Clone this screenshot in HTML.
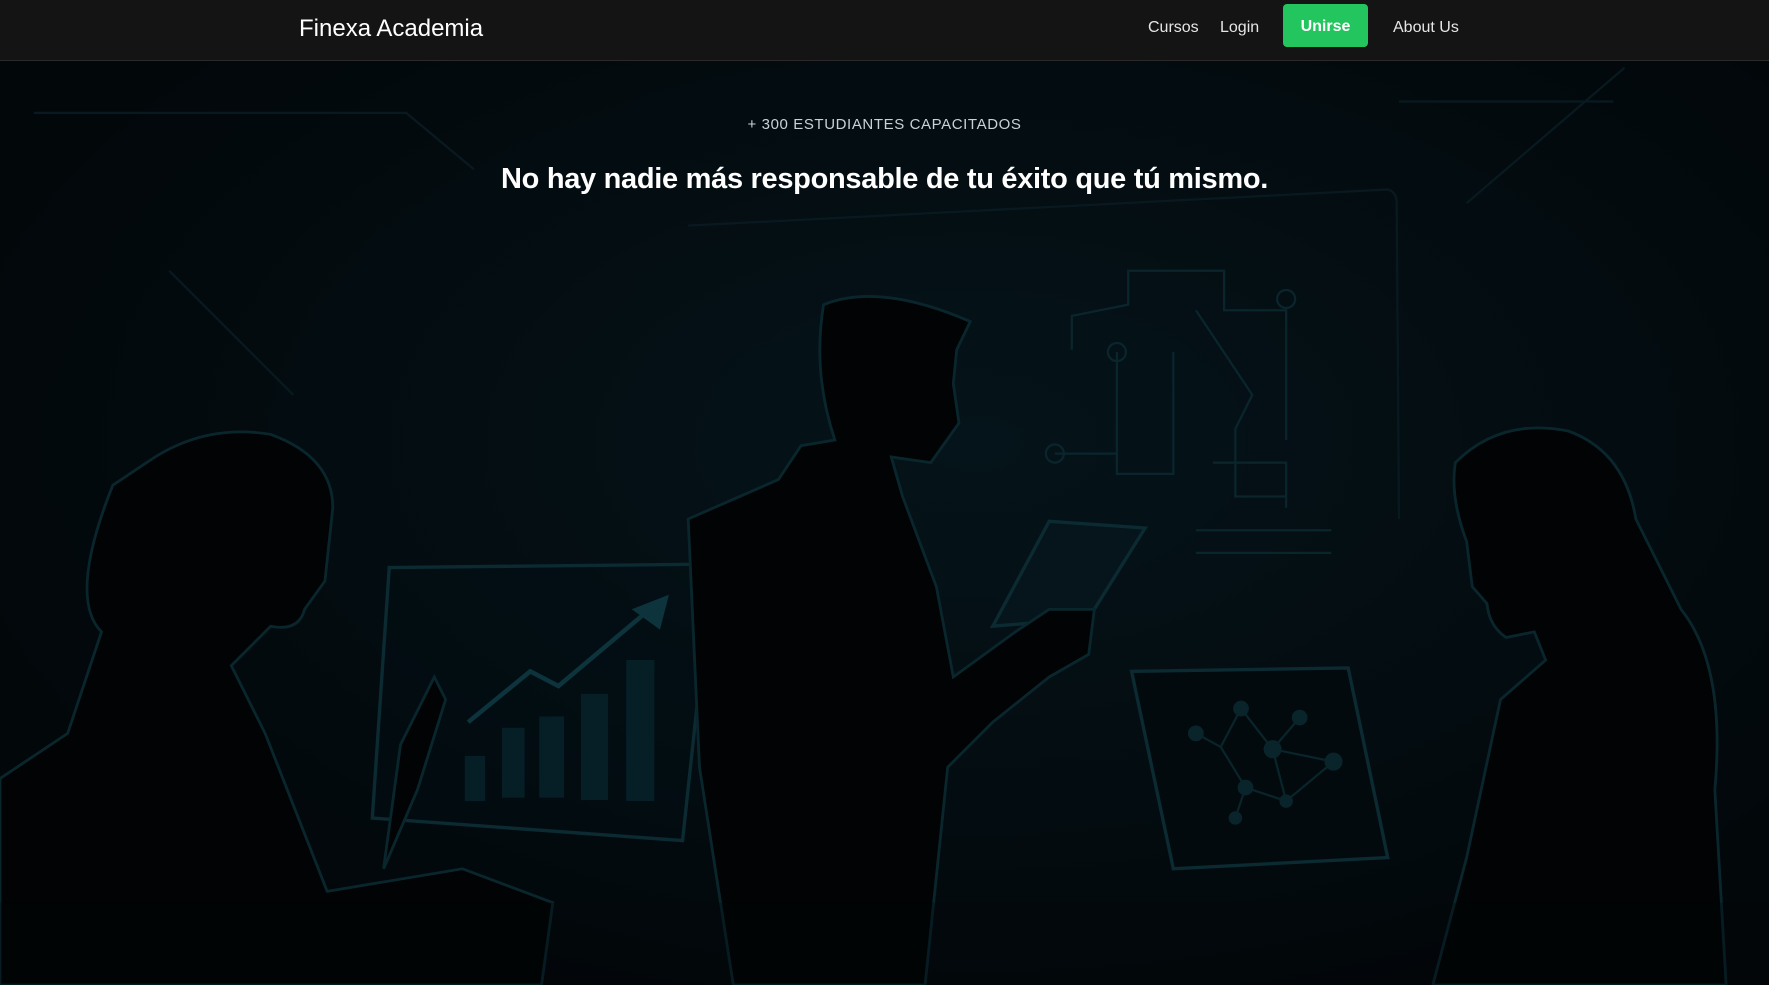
<!DOCTYPE html>
<html><head><meta charset="utf-8"><style>
html,body{margin:0;padding:0;width:1769px;height:985px;overflow:hidden;background:#03090c;font-family:"Liberation Sans",sans-serif}
svg.bg{position:absolute;left:0;top:0;width:1769px;height:985px}
nav{position:absolute;left:0;top:0;width:1769px;height:61px;background:#141414;border-bottom:1px solid #2a2a2a;box-sizing:border-box}
.logo{position:absolute;left:299px;top:13px;color:#fff;font-size:24px;line-height:32px}
.lnk{position:absolute;top:18px;color:#e6e6e6;font-size:16px;line-height:20px}
.btn{position:absolute;left:1283px;top:4px;width:85px;height:43px;background:#22c55e;border-radius:4px;color:#fff;font-weight:bold;font-size:16px;line-height:45px;text-align:center}
.sub{position:absolute;left:0;width:1769px;top:116px;text-align:center;color:#c9d3d6;font-size:15px;letter-spacing:0.6px}
h1{position:absolute;left:0;width:1769px;top:161px;margin:0;text-align:center;color:#fff;font-size:29px;font-weight:bold;line-height:36px;letter-spacing:-0.3px}
</style></head><body>
<svg class="bg" viewBox="0 0 1568 873" preserveAspectRatio="none">
<defs><radialGradient id="g" cx="0.55" cy="0.45" r="0.6"><stop offset="0" stop-color="#05141a"/><stop offset="1" stop-color="#02070a"/></radialGradient></defs>
<rect width="1568" height="873" fill="url(#g)"/>
<g fill="none" stroke="#081a20" stroke-width="2">
<path d="M30 100 H360 L420 150 M150 240 L260 350 M1240 90 L1430 90 M1300 180 L1440 60"/>
<path d="M610 200 L1230 168 Q1238 170 1238 180 L1240 460"/>
</g>
<g fill="none" stroke="#0a252c" stroke-width="2">
<path d="M950 310 V280 L1000 270 V240 H1085 V275 H1140 V390 M990 312 V420 H1040 V312 M1060 275 L1110 350 L1095 380 V440 H1140 M1075 410 H1140 V450 M935 402 H990 M1060 470 H1180 M1060 490 H1180"/>
<circle cx="990" cy="312" r="8"/><circle cx="935" cy="402" r="8"/><circle cx="1140" cy="265" r="8"/>
</g>
<g stroke="#0b2a31" stroke-width="3">
<path d="M345 503 L625 500 Q632 502 630 512 L605 745 L330 725 Z" fill="#03111560"/>
<path d="M1003 595 L1195 592 L1230 760 L1040 770 Z" fill="#020a0d"/>
<path d="M930 462 L1015 468 L965 548 L880 555 Z" fill="#05151b"/>
</g>
<g fill="#061f26"><rect x="412" y="670" width="18" height="40"/><rect x="445" y="645" width="20" height="62"/><rect x="478" y="635" width="22" height="72"/><rect x="515" y="615" width="24" height="94"/><rect x="555" y="585" width="25" height="125"/></g>
<path d="M415 640 L470 595 L495 608 L570 545" stroke="#0d333c" stroke-width="4" fill="none"/><path d="M560 540 L593 527 L585 558 Z" fill="#0d333c"/>
<g stroke="#09242a" stroke-width="2" fill="#09242a"><path d="M1060 650 L1082 662 L1100 628 L1128 664 L1152 636 M1082 662 L1104 698 L1140 710 L1182 675 L1128 664 L1140 710 M1104 698 L1095 725" fill="none"/><circle cx="1060" cy="650" r="6"/><circle cx="1100" cy="628" r="6"/><circle cx="1152" cy="636" r="6"/><circle cx="1128" cy="664" r="7"/><circle cx="1182" cy="675" r="7"/><circle cx="1104" cy="698" r="6"/><circle cx="1140" cy="710" r="5"/><circle cx="1095" cy="725" r="5"/></g>
<g fill="#010304" stroke="#0a262d" stroke-width="2.5">
<path d="M130 410 Q180 375 240 385 Q295 405 295 450 L288 515 L270 540 Q265 560 240 555 L205 590 L235 650 L290 790 L410 770 L490 800 L480 873 L0 873 L0 690 L60 650 L90 560 Q60 530 100 430 Z"/>
<path d="M340 770 L355 660 L385 600 L395 620 L370 700 Z"/>
<path d="M730 270 Q780 250 860 285 L848 310 L845 340 L850 375 L825 410 L790 405 L800 440 L830 520 L845 600 L900 560 L930 540 L970 540 L965 580 L930 600 L880 640 L840 680 L820 873 L650 873 L620 680 L610 460 L690 425 L710 395 L740 390 Q720 330 730 270 Z"/>
<path d="M1290 410 Q1330 370 1390 382 Q1440 400 1450 460 L1490 540 Q1530 590 1520 700 L1530 873 L1270 873 L1300 760 L1330 620 L1370 585 L1360 560 L1335 565 Q1320 555 1318 535 L1305 520 L1300 480 Q1285 440 1290 410 Z"/>
</g>
<rect y="800" width="1568" height="73" fill="#02080b" opacity="0.3"/>
</svg>
<nav>
<div class="logo">Finexa Academia</div>
<div class="lnk" style="left:1148px">Cursos</div>
<div class="lnk" style="left:1220px">Login</div>
<div class="btn">Unirse</div>
<div class="lnk" style="left:1393px">About Us</div>
</nav>
<div class="sub">+ 300 ESTUDIANTES CAPACITADOS</div>
<h1>No hay nadie más responsable de tu éxito que tú mismo.</h1>
</body></html>
